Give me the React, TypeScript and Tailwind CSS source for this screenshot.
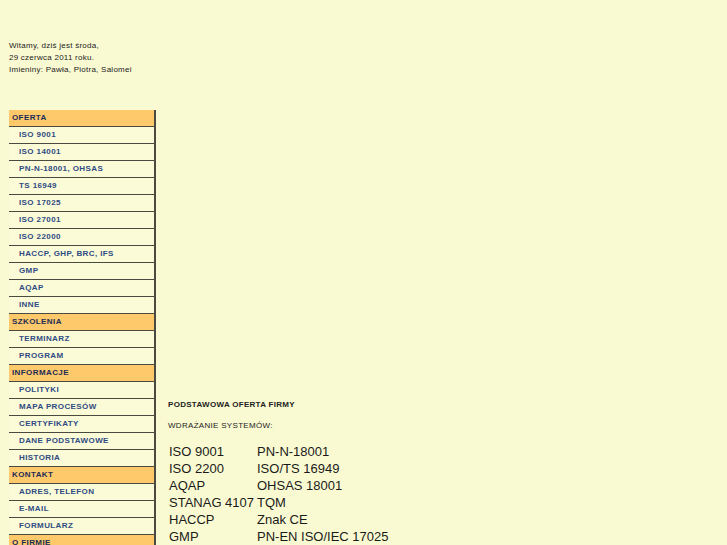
const menu: { label: string; head?: boolean }[] = [
  { label: 'OFERTA', head: true },
  { label: 'ISO 9001' },
  { label: 'ISO 14001' },
  { label: 'PN-N-18001, OHSAS' },
  { label: 'TS 16949' },
  { label: 'ISO 17025' },
  { label: 'ISO 27001' },
  { label: 'ISO 22000' },
  { label: 'HACCP, GHP, BRC, IFS' },
  { label: 'GMP' },
  { label: 'AQAP' },
  { label: 'INNE' },
  { label: 'SZKOLENIA', head: true },
  { label: 'TERMINARZ' },
  { label: 'PROGRAM' },
  { label: 'INFORMACJE', head: true },
  { label: 'POLITYKI' },
  { label: 'MAPA PROCESÓW' },
  { label: 'CERTYFIKATY' },
  { label: 'DANE PODSTAWOWE' },
  { label: 'HISTORIA' },
  { label: 'KONTAKT', head: true },
  { label: 'ADRES, TELEFON' },
  { label: 'E-MAIL' },
  { label: 'FORMULARZ' },
  { label: 'O FIRMIE', head: true },
];

const systems = [
  ['ISO 9001', 'PN-N-18001'],
  ['ISO 2200', 'ISO/TS 16949'],
  ['AQAP', 'OHSAS 18001'],
  ['STANAG 4107', 'TQM'],
  ['HACCP', 'Znak CE'],
  ['GMP', 'PN-EN ISO/IEC 17025'],
];

export default function App() {
  return (
    <div
      className="min-h-screen bg-[#fafad2] text-black"
      style={{ fontFamily: '"Liberation Sans", Arial, sans-serif' }}
    >
      <div className="pt-[40px] pl-[9px] text-[8px] tracking-[0.25px] leading-[12px] text-[#222]">
        <p>Witamy, dziś jest środa,</p>
        <p>29 czerwca 2011 roku.</p>
        <p>Imieniny: Pawła, Piotra, Salomei</p>
      </div>

      <div className="flex mt-[34px]">
        <nav className="ml-[9px] w-[147px] shrink-0">
          {menu.map((m) =>
            m.head ? (
              <div
                key={m.label}
                className="h-[17px] bg-[#fdc96b] border-r-2 border-b border-[#4a4a40] pl-[3px] flex items-center text-[8px] font-bold tracking-[0.4px] text-[#1d2c55]"
              >
                {m.label}
              </div>
            ) : (
              <div
                key={m.label}
                className="h-[17px] bg-[#fbfbd8] border-r-2 border-b border-[#4a4a40] pl-[10px] flex items-center text-[8px] font-bold tracking-[0.4px] text-[#2f4b82]"
              >
                {m.label}
              </div>
            )
          )}
        </nav>

        <main className="pl-[12px] pt-[289px]">
          <h2 className="text-[8px] font-bold tracking-[0.3px] text-[#222] leading-[12px]">
            PODSTAWOWA OFERTA FIRMY
          </h2>
          <p className="mt-[9px] text-[8px] tracking-[0.3px] text-[#222] leading-[12px]">
            WDRAŻANIE SYSTEMÓW:
          </p>
          <table className="mt-[11px] ml-[1px] text-[13px] text-[#1a1a1a] leading-[17px] border-collapse">
            <tbody>
              {systems.map(([a, b]) => (
                <tr key={a}>
                  <td className="p-0 pr-[2px] w-[88px] whitespace-nowrap">{a}</td>
                  <td className="p-0 whitespace-nowrap">{b}</td>
                </tr>
              ))}
            </tbody>
          </table>
        </main>
      </div>
    </div>
  );
}
